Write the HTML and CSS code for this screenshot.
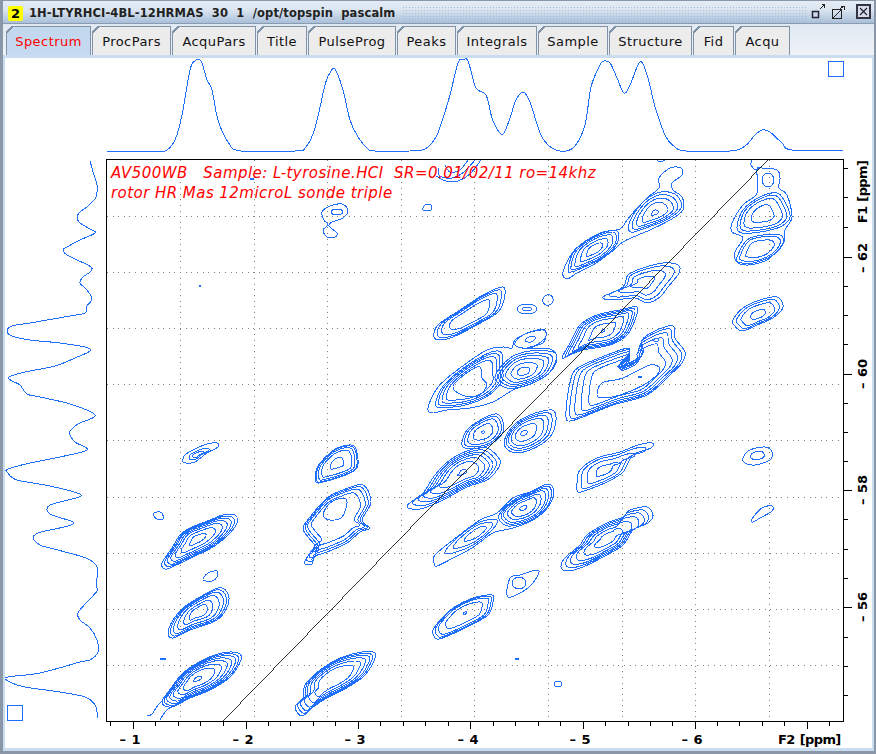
FILE: index.html
```html
<!DOCTYPE html>
<html lang="en">
<head>
<meta charset="utf-8">
<title>TopSpin</title>
<link rel="stylesheet" href="styles.css">
</head>
<body>
<div class="window">
  <header class="titlebar">
    <span class="badge">2</span>
    <span class="title">1H-LTYRHCI-4BL-12HRMAS  30  1  /opt/topspin  pascalm</span>
    <span class="grip"></span>
    <svg class="winbtn" width="65" height="20" viewBox="0 0 65 20">
      <path class="ico-thin" d="M11 7 L16 2 M12.500 2.500 H15.500 V5.500 M23.500 7.500 H32.500 V16.500 H23.500 Z M24 16 L32 8 M31 7 L35 4 M31.500 4.500 H35.500 V8"/>
      <rect class="ico-box" x="3.500" y="9.500" width="6" height="6"/>
      <rect class="ico-close" x="48" y="3" width="13" height="13"/>
      <path class="ico-x" d="M51 6 L58 13 M58 6 L51 13"/>
    </svg>
  </header>
  <nav class="tabs">
    <a class="tab tab-on w85">Spectrum</a>
    <a class="tab w80">ProcPars</a>
    <a class="tab w85">AcquPars</a>
    <a class="tab w51">Title</a>
    <a class="tab w89">PulseProg</a>
    <a class="tab w60">Peaks</a>
    <a class="tab w81">Integrals</a>
    <a class="tab w71">Sample</a>
    <a class="tab w84">Structure</a>
    <a class="tab w42">Fid</a>
    <a class="tab w55">Acqu</a>
  </nav>
  <main class="body">
    <section class="panel">
      <svg class="proj-top" viewBox="5 58 867 101" width="867" height="101">
        <path id="f2proj" class="trace"/>
        <rect class="trace" x="828.500" y="61.500" width="15" height="15"/>
      </svg>
      <div class="row">
        <svg class="proj-left" viewBox="5 159 101 589" width="101" height="589">
          <path id="f1proj" class="trace"/>
          <rect class="trace" x="7.500" y="705.500" width="15" height="15"/>
        </svg>
        <svg class="plot" viewBox="106 159 766 589" width="766" height="589">
          <defs><clipPath id="area"><rect x="107" y="160" width="736" height="561"/></clipPath></defs>
          <path class="grid" d="M180.500 160V718M254.500 160V718M327.500 160V718M401.500 160V718M474.500 160V718M548.500 160V718M622.500 160V718M695.500 160V718M769.500 160V718"/>
          <path class="grid" d="M107 216.500H840M107 272.500H840M107 328.500H840M107 384.500H840M107 440.500H840M107 497.500H840M107 553.500H840M107 609.500H840M107 665.500H840"/>
          <g id="contours" clip-path="url(#area)"></g>
          <path class="diag" d="M769 159L223 721"/>
          <rect class="frame" x="106.500" y="159.500" width="737" height="562"/>
          <path class="frame" d="M110.500 721V726M133.500 721V729M155.500 721V726M178.500 721V726M200.500 721V726M223.500 721V726M246.500 721V729M268.500 721V726M290.500 721V726M313.500 721V726M335.500 721V726M358.500 721V729M380.500 721V726M403.500 721V726M425.500 721V726M448.500 721V726M470.500 721V729M493.500 721V726M515.500 721V726M538.500 721V726M560.500 721V726M583.500 721V729M605.500 721V726M628.500 721V726M650.500 721V726M672.500 721V726M695.500 721V729M717.500 721V726M739.500 721V726M762.500 721V726M784.500 721V726M807.500 721V729M829.500 721V726"/>
          <path class="frame" d="M843 168.500H848M843 197.500H848M843 227.500H848M843 257.500H852M843 286.500H848M843 315.500H848M843 344.500H848M843 374.500H852M843 403.500H848M843 432.500H848M843 461.500H848M843 490.500H852M843 519.500H848M843 549.500H848M843 578.500H848M843 607.500H852M843 637.500H848M843 666.500H848M843 695.500H848"/>
          <text class="note" x="111" y="178">AV500WB   Sample: L-tyrosine.HCI  SR=0.01/02/11 ro=14khz</text>
          <text class="note" x="111" y="198">rotor HR Mas 12microL sonde triple</text>
          <text class="axis" x="130" y="744" text-anchor="middle">– 1</text>
          <text class="axis" x="243" y="744" text-anchor="middle">– 2</text>
          <text class="axis" x="355" y="744" text-anchor="middle">– 3</text>
          <text class="axis" x="468" y="744" text-anchor="middle">– 4</text>
          <text class="axis" x="580" y="744" text-anchor="middle">– 5</text>
          <text class="axis" x="692" y="744" text-anchor="middle">– 6</text>
          <text class="axis axis-name" x="778" y="744">F2 [ppm]</text>
          <text class="axis axis-name" transform="translate(867 192) rotate(-90)" text-anchor="middle">F1 [ppm]</text>
          <text class="axis" transform="translate(867 258) rotate(-90)" text-anchor="middle">– 62</text>
          <text class="axis" transform="translate(867 374) rotate(-90)" text-anchor="middle">– 60</text>
          <text class="axis" transform="translate(867 490) rotate(-90)" text-anchor="middle">– 58</text>
          <text class="axis" transform="translate(867 607) rotate(-90)" text-anchor="middle">– 56</text>
        </svg>
      </div>
    </section>
  </main>
</div>
<script src="plot.js"></script>
</body>
</html>
```
FILE: styles.css
```css
* { box-sizing: border-box; }
html, body { margin: 0; padding: 0; background: #fff; }
.window {
  width: 876px; height: 754px;
  display: flex; flex-direction: column;
  border-style: solid; border-color: #8a97a8;
  border-width: 1px 2px 3px 3px;
  font-family: "DejaVu Sans", sans-serif;
}
.titlebar {
  height: 23px; flex: none;
  display: flex; align-items: center;
  padding: 2px 0 0 5px;
  background: linear-gradient(#e4ecf5, #dbe5f0 40%, #a9bfd9);
  border-bottom: 1px solid #8a9cb2;
}
.badge {
  width: 15px; height: 15px; flex: none;
  background: #ff0; border-radius: 2px;
  font-weight: 700; font-size: 13px; line-height: 15px; text-align: center; color: #000;
}
.title {
  margin-left: 6px; flex: none;
  font-weight: 700; font-size: 11.500px; letter-spacing: .12px; color: #222;
  white-space: pre;
}
.grip {
  flex: 1; height: 15px; margin: 0 3px 0 7px;
  background: radial-gradient(circle, #a3bcdc 1px, transparent 1px) 0 0 / 3px 3px;
}
.winbtn { flex: none; margin: -2px 0 0 0; overflow: visible; }
.ico-thin { fill: none; stroke: #222; stroke-width: 1; shape-rendering: crispEdges; }
.ico-box { fill: #cfdcec; stroke: #223; stroke-width: 1.5; }
.ico-close { fill: #d6dde6; stroke: #334; stroke-width: 2; }
.ico-x { fill: none; stroke: #223; stroke-width: 1.2; }
.tabs {
  height: 31px; flex: none;
  display: flex; align-items: flex-end;
  padding-left: 3px;
  background: linear-gradient(#dfe8f2, #f0f3f7);
}
.tab {
  position: relative;
  height: 29px; flex: none;
  margin-right: 1px;
  display: flex; align-items: center; justify-content: center;
  padding-top: 1px;
  font-size: 13px; letter-spacing: .45px; color: #111;
  background: #ececec;
  border: solid #7f92a8; border-width: 1px 1px 0 1px;
}
.tab::before {
  content: ""; position: absolute; left: -1px; top: -1px;
  width: 7px; height: 7px;
  background: linear-gradient(135deg, #e2eaf3 0 42%, #7f92a8 42% 58%, transparent 58%);
}
.tab-on { background: linear-gradient(#c3d8ee, #c5daf0); color: #f00; }
.w85 { width: 84px; } .w80 { width: 79px; } .w51 { width: 50px; } .w89 { width: 88px; }
.w60 { width: 59px; } .w81 { width: 80px; } .w71 { width: 70px; } .w84 { width: 83px; }
.w42 { width: 41px; } .w55 { width: 55px; }
.tab-on.w85 { width: 85px; }
.body { flex: 1; padding: 3px 2px 3px 2px; background: #c9dcf0; min-height: 0; }
.panel { background: #fff; height: 690px; display: flex; flex-direction: column; }
.panel svg { display: block; flex: none; }
.row { display: flex; height: 589px; }
.trace { fill: none; stroke: #1f6fff; stroke-width: 1; shape-rendering: crispEdges; }
#contours path { fill: none; stroke: #1f6fff; stroke-width: 1; shape-rendering: crispEdges; }
.grid { fill: none; stroke: #808080; stroke-width: 1; stroke-dasharray: 1 4.620; shape-rendering: crispEdges; }
.diag { fill: none; stroke: #000; stroke-width: .8; shape-rendering: crispEdges; }
.frame { fill: none; stroke: #000; stroke-width: 1; shape-rendering: crispEdges; }
.note { font: oblique 15px "DejaVu Sans", sans-serif; fill: #f00; white-space: pre; letter-spacing: .45px; }
.axis { font: 700 13px "DejaVu Sans", sans-serif; fill: #000; white-space: pre; word-spacing: 1px; }
.axis-name { letter-spacing: -.6px; }
```
FILE: plot.js
```js
// Contour plot data: outlines in page pixels, drawn as nested levels.
function pairs(f) { var r = []; for (var i = 0; i < f.length; i += 2) r.push([f[i], f[i + 1]]); return r; }
function n(v) { return v.toFixed(1); }
function seg(a, b, c, d) {
  return 'C' + n(b[0] + (c[0] - a[0]) / 6) + ' ' + n(b[1] + (c[1] - a[1]) / 6) + ' ' +
    n(c[0] - (d[0] - b[0]) / 6) + ' ' + n(c[1] - (d[1] - b[1]) / 6) + ' ' + n(c[0]) + ' ' + n(c[1]);
}
function closedPath(p) {
  var L = p.length, d = 'M' + n(p[0][0]) + ' ' + n(p[0][1]);
  for (var i = 0; i < L; i++) d += seg(p[(i + L - 1) % L], p[i], p[(i + 1) % L], p[(i + 2) % L]);
  return d + 'Z';
}
function openPath(p) {
  var L = p.length, d = 'M' + n(p[0][0]) + ' ' + n(p[0][1]);
  for (var i = 0; i < L - 1; i++) d += seg(p[Math.max(i - 1, 0)], p[i], p[i + 1], p[Math.min(i + 2, L - 1)]);
  return d;
}
var A = -35 * Math.PI / 180, CA = Math.cos(A), SA = Math.sin(A);
function level(p, c, s) {
  var sv = Math.pow(s, 0.88);
  return p.map(function (q) {
    var dx = q[0] - c[0], dy = q[1] - c[1];
    var u = dx * CA + dy * SA, v = -dx * SA + dy * CA;
    u *= s; v *= sv;
    return [c[0] + u * CA - v * SA, c[1] + u * SA + v * CA];
  });
}
var out = [];
function peak(cx, cy, levels, f) {
  var p = pairs(f);
  levels.forEach(function (s) { out.push(closedPath(level(p, [cx, cy], s))); });
}
function oval(cx, cy, rx, ry, rot) {
  var p = [], r = (rot || 0) * Math.PI / 180;
  for (var i = 0; i < 8; i++) {
    var t = i * Math.PI / 4, x = rx * Math.cos(t), y = ry * Math.sin(t);
    p.push([cx + x * Math.cos(r) - y * Math.sin(r), cy + x * Math.sin(r) + y * Math.cos(r)]);
  }
  out.push(closedPath(p));
}
function shape(f) { out.push(closedPath(pairs(f))); }
function line(f) { out.push(openPath(pairs(f))); }

// top-right pair
peak(762, 214, [1], [762,168,777,170,780,178,779,188,787,195,792,217,785,230,784,242,778,250,767,260,748,265,737,262,735,252,743,238,732,232,732,223,743,205,757,193,757,170]);
oval(768, 180, 6, 7);
line([752,160,751,165,756,170,760,167]);
peak(762, 214, [1,.88,.72,.42], [737,227,743,210,760,197,777,193,785,202,790,217,780,227,760,232,742,233]);
peak(760, 249, [1,.86,.6], [737,257,747,240,763,235,780,235,783,243,773,255,753,263,738,262]);
peak(758, 315, [1,.85,.66,.3], [733,320,743,308,760,300,777,297,783,307,773,318,757,325,742,331,734,325]);
// upper chain
peak(650, 213, [1], [563,272,573,252,587,240,603,232,620,229,627,220,640,205,648,197,659,188,659,178,670,168,681,168,682,175,672,183,673,190,682,197,683,210,670,220,650,230,638,235,623,242,610,253,593,265,577,273,567,279]);
peak(655, 213, [.96,.82,.66,.46,.12], [628,224,637,208,648,197,663,191,678,195,682,208,667,220,647,228,630,233]);
peak(595, 249, [.96,.86,.72,.52,.3], [567,270,573,252,587,240,603,232,618,230,618,243,603,258,583,268,570,273]);
peak(643, 282, [1,.84,.6,.3], [603,297,623,287,628,275,643,268,663,263,678,265,679,273,668,287,660,297,647,303,635,298,613,300]);
peak(603, 331, [1,.92,.84,.74,.6,.36,.05], [562,358,570,343,580,325,597,315,620,310,637,307,635,320,627,335,610,345,583,350,570,355]);
// big right blob
peak(630, 378, [1,.94,.86,.76,.64], [566,417,568,393,573,373,583,365,607,355,628,348,628,355,618,367,642,355,642,340,657,330,673,326,675,338,685,352,682,363,670,375,647,395,613,405,583,417,570,421]);
shape([597,395,602,383,623,378,650,365,660,370,647,383,620,395,603,398]);
oval(656, 340, 2.5, 1.5); oval(640, 377, 2, 1);
// big left blob
peak(490, 380, [1], [428,408,438,387,460,368,487,350,503,347,512,348,515,340,530,332,545,330,543,343,527,348,550,349,557,358,550,372,533,383,513,390,493,402,470,408,447,410,433,413]);
peak(470, 383, [.98,.9,.8,.68], [435,405,442,387,463,368,490,352,502,352,503,367,503,380,490,395,467,405,443,408]);
shape([453,386,468,372,480,367,482,378,487,385,478,396,462,395]);
peak(523, 372, [1,.88,.76,.62,.42,.2], [495,377,510,358,530,351,553,352,556,360,547,375,527,385,507,388]);
peak(530, 339, [1,.32], [515,345,523,335,543,330,545,338,530,348]);
peak(470, 316, [1,.9,.78,.56], [434,337,438,325,460,310,483,295,503,287,504,300,497,313,473,327,453,337,440,340]);
oval(527, 309, 10, 5); oval(527, 309, 5, 2);
oval(548, 300, 5, 5.5, 30);
// middle diagonal
peak(483, 432, [1,.88,.72,.46,.06], [463,447,465,433,477,422,497,414,504,427,497,440,480,448]);
peak(523, 433, [1,.88,.76,.62,.4,.12], [504,443,512,427,530,415,552,410,556,420,550,437,530,450,512,452]);
peak(463, 472, [1,.9,.8,.7,.58,.42,.1], [407,506,423,493,435,475,450,460,470,450,487,448,500,460,497,470,487,480,467,487,443,500,420,509]);
peak(605, 470, [1,.84,.62,.3], [577,483,580,470,597,458,620,452,638,445,652,443,651,448,633,455,623,472,607,482,587,490,578,492]);
peak(500, 525, [1], [434,563,435,555,453,540,480,520,497,513,513,498,530,492,548,484,554,492,548,507,533,520,513,528,493,533,472,548,453,558,437,566]);
peak(523, 508, [.95,.85,.75,.6,.44,.12], [498,515,513,500,530,492,548,485,553,492,548,507,533,520,510,527,500,523]);
peak(478, 532, [1,.75,.42], [445,552,458,537,480,522,497,520,492,530,473,545,453,553]);
peak(609, 538, [1,.9,.8,.68,.52,.3], [561,567,565,558,580,545,587,535,607,523,623,517,630,510,647,507,653,515,648,523,633,530,623,545,603,557,583,567,567,571]);
peak(520, 584, [1], [508,597,510,578,520,575,537,570,538,575,528,588]);
oval(519, 583, 7, 6);
peak(465, 613, [1,.92,.82,.6,.06], [433,630,443,617,453,608,473,598,492,595,493,602,488,615,467,627,450,635,437,639]);
oval(517, 659, 2, 1); oval(558, 684, 4, 3);
// small ones
shape([423,210,425,205,431,205,431,210]);
shape([322,212,330,206,342,204,348,210,343,218,332,222,329,226,337,233,335,237,327,237,323,230,328,225,324,220]);
oval(337, 212, 6, 3);
line([436,176,446,181,458,181,470,174,481,160]);
line([438,168,440,176,452,178,464,172,475,160]);
line([445,165,450,172,460,170,468,160]);
line([657,160,660,162,665,160]);
oval(252, 179, 1.5, .6);
// left columns
peak(197, 455, [1,.55,.3], [183,462,185,455,195,449,207,444,217,443,218,447,207,453,195,462,187,463]);
shape([153,514,157,512,162,513,163,519,157,519]);
peak(197, 539, [1,.92,.84,.74,.62,.45,.22], [162,563,172,548,180,535,190,528,210,520,223,515,235,515,237,523,228,535,213,547,193,557,172,567,165,569]);
shape([203,580,208,573,217,571,217,577,212,581]);
peak(198, 612, [1,.92,.82,.68,.48,.3], [168,633,173,620,183,608,200,597,218,588,227,592,228,605,217,620,190,630,173,638]);
peak(197, 679, [1,.94,.87,.78,.68,.55,.4,.1], [162,702,172,687,183,673,203,660,222,653,238,653,241,660,230,677,210,690,190,698,172,707]);
line([147,716,152,714,158,705,163,700]);
line([160,720,165,712,172,706]);
oval(163, 659, 2.5, .8); oval(200, 286, 1, 1);
peak(333, 515, [1,.93,.85,.72], [305,564,307,557,313,552,317,548,308,537,303,528,310,517,327,498,343,490,363,485,371,502,362,520,370,528,360,532,347,543,327,552,313,557,312,564]);
shape([323,515,330,503,343,498,347,503,342,517,330,520]);
peak(337, 463, [1,.95,.85,.7,.3], [316,482,317,468,330,453,343,446,355,447,357,468,340,477,323,482]);
peak(333, 678, [1,.93,.86,.76,.64,.48], [295,707,303,698,305,685,320,670,340,658,362,652,375,653,373,663,363,677,343,690,327,698,313,707,302,716]);
// far right small
peak(757, 455, [1,.45], [743,458,750,450,765,447,772,452,770,460,755,465,745,463]);
peak(762, 513, [1], [752,519,762,508,772,506,772,511,760,518,753,522]);

var ns = 'http://www.w3.org/2000/svg', g = document.getElementById('contours');
out.forEach(function (d) {
  var e = document.createElementNS(ns, 'path');
  e.setAttribute('d', d);
  g.appendChild(e);
});

document.getElementById('f2proj').setAttribute('d', openPath(pairs([
  107,151,148,151,165,151,175,140,182,115,190,70,195,61,201,61,207,80,212,90,218,120,228,142,241,151,295,151,306,147,315,128,325,85,330,73,335,69,343,90,350,120,358,137,368,149,375,151,410,151,425,149,436,137,443,118,450,95,458,63,463,60,468,61,476,88,486,95,492,118,499,132,504,133,510,118,516,100,523,92,530,102,540,133,548,145,556,150,566,151,575,146,585,125,591,87,600,65,604,61,610,63,617,78,624,93,630,85,640,62,647,75,656,110,666,137,675,147,686,151,730,151,745,146,755,135,762,130,770,132,782,143,792,150,843,151
])));
document.getElementById('f1proj').setAttribute('d', openPath(pairs([
  90,161,94,175,97,185,96,197,88,206,80,212,77,217,80,223,90,229,95,233,80,240,67,247,63,250,67,255,75,259,91,267,90,272,83,277,80,283,87,290,92,299,87,306,85,313,70,316,30,323,12,326,7,331,12,336,30,340,60,343,85,347,90,351,75,358,55,366,25,372,9,377,12,381,20,385,27,394,40,397,70,404,95,415,78,424,70,431,70,435,75,442,87,450,60,457,30,463,8,469,8,473,17,480,50,486,81,495,60,502,50,505,47,510,52,515,73,522,68,526,50,530,38,533,33,538,40,545,50,548,80,556,90,560,97,567,97,578,96,585,97,591,87,602,78,613,80,620,90,628,97,640,98,652,90,660,80,662,40,673,8,677,8,681,25,687,60,692,85,697,95,705,98,718
])));
```
